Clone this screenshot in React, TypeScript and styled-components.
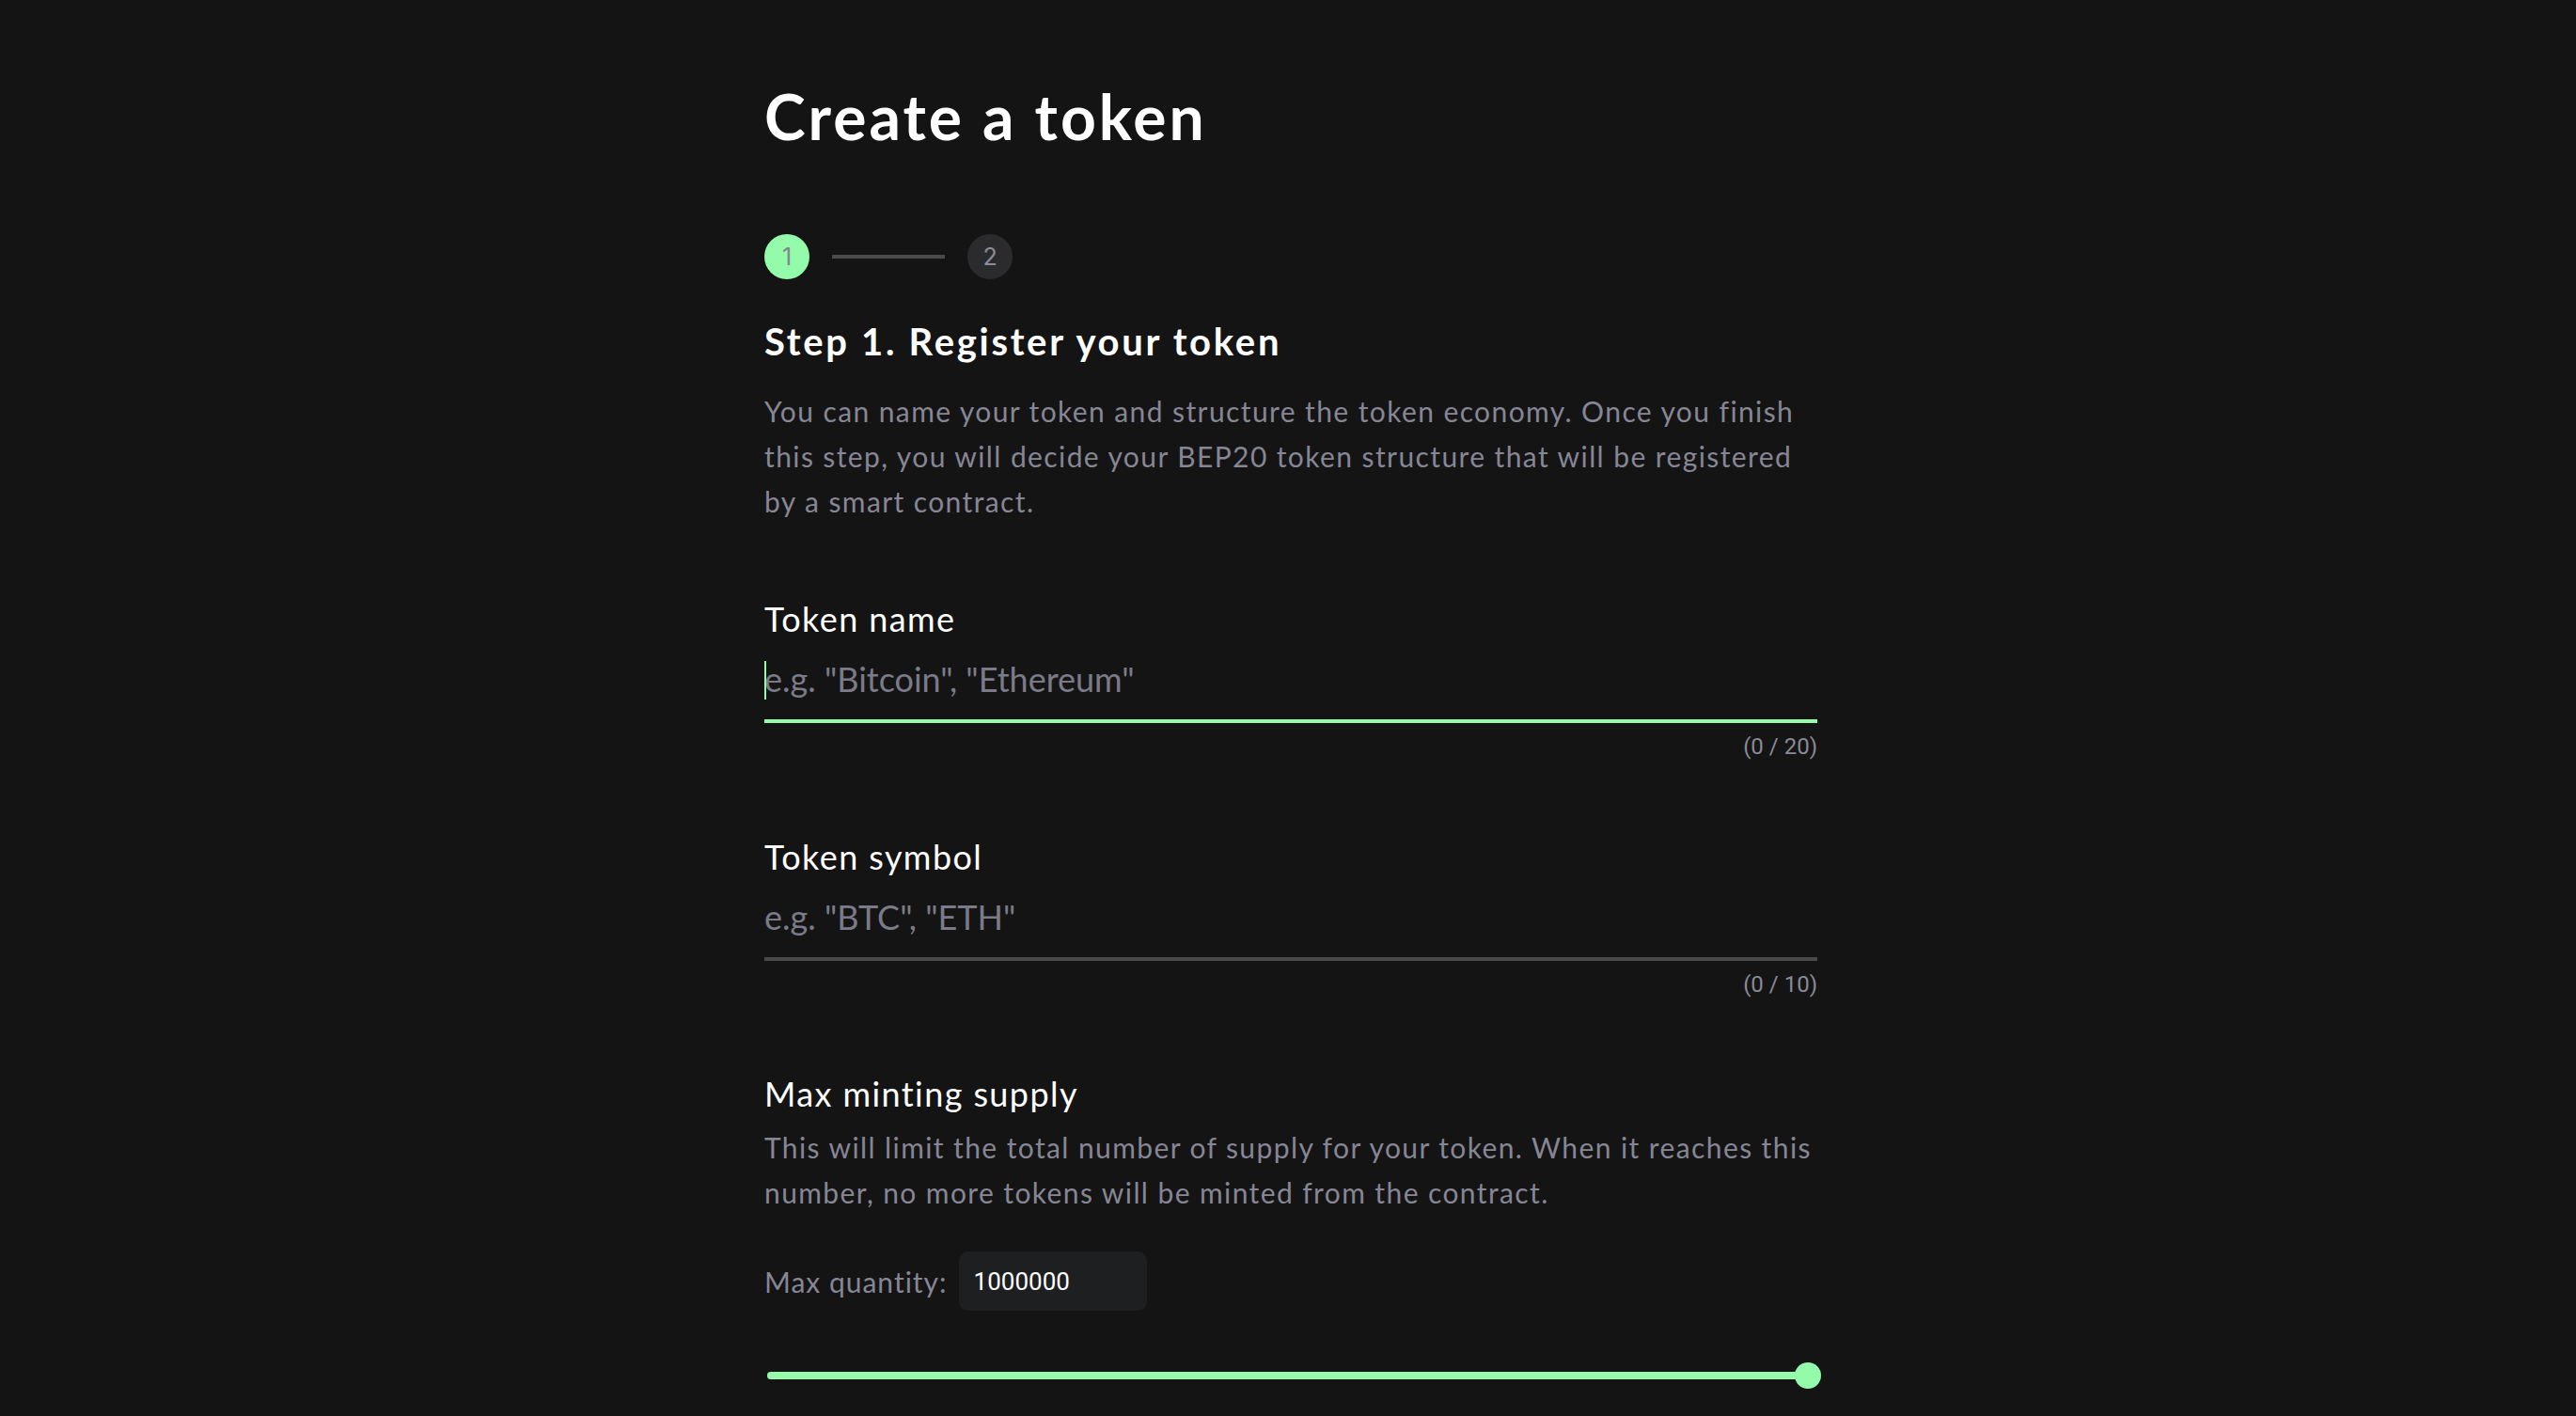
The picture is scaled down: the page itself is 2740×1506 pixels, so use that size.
import React from "react";
import styled, { createGlobalStyle } from "styled-components";

const GlobalStyle = createGlobalStyle`
  html, body {
    margin: 0;
    padding: 0;
    background: #141414;
  }
  body {
    font-family: "Lato", "Open Sans", sans-serif;
    color: #ffffff;
  }
  * { box-sizing: border-box; }
`;

const GREEN = "#94fbaa";
const MUTED = "#868694";

const Page = styled.main`
  min-height: 1506px;
  padding-top: 84px;
`;

const Column = styled.div`
  width: 1126px;
  padding-left: 6px;
  margin: 0 auto;
  display: flex;
  flex-direction: column;
`;

const Title = styled.h1`
  margin: 0;
  font-size: 66px;
  line-height: 1.2;
  font-weight: 700;
  letter-spacing: 3px;
`;

const Stepper = styled.div`
  margin-top: 86px;
  display: flex;
  align-items: center;
  gap: 24px;
`;

const StepDot = styled.div<{ $active?: boolean }>`
  width: 48px;
  height: 48px;
  border-radius: 50%;
  display: flex;
  align-items: center;
  justify-content: center;
  background: ${(p) => (p.$active ? GREEN : "#2b2b2d")};
  color: ${(p) => (p.$active ? "#82858f" : "#8c8c9a")};
  font-family: "Inter", "Roboto", sans-serif;
  font-size: 25px;
`;

const StepLine = styled.div`
  width: 120px;
  height: 4px;
  background: #4a4a4a;
`;

const StepHeading = styled.h2`
  margin: 42px 0 0;
  font-size: 40px;
  line-height: 48px;
  font-weight: 700;
  letter-spacing: 2.7px;
`;

const Description = styled.p<{ $top: number }>`
  margin: ${(p) => p.$top}px 0 0;
  font-size: 30px;
  line-height: 48px;
  color: ${MUTED};
  letter-spacing: 1.4px;
`;

const Section = styled.section<{ $top: number }>`
  margin-top: ${(p) => p.$top}px;
  display: flex;
  flex-direction: column;
`;

const Label = styled.label`
  font-size: 36px;
  line-height: 43px;
  font-weight: 400;
  color: #ffffff;
  letter-spacing: 1.4px;
`;

const Field = styled.div<{ $focused?: boolean }>`
  position: relative;
  margin-top: 18px;
  padding-bottom: 19px;
  border-bottom: 4px solid ${(p) => (p.$focused ? GREEN : "#4a4a4a")};
`;

const Input = styled.input`
  display: block;
  width: 100%;
  height: 48px;
  padding: 0;
  border: none;
  outline: none;
  background: transparent;
  color: #ffffff;
  font-family: "Lato", sans-serif;
  font-size: 36px;
  caret-color: ${GREEN};
  &::placeholder {
    color: #7b7b88;
  }
`;

const Caret = styled.span`
  position: absolute;
  left: 0;
  top: 5px;
  width: 2px;
  height: 41px;
  background: ${GREEN};
`;

const Counter = styled.div`
  margin-top: 10px;
  align-self: flex-end;
  font-family: "Roboto", sans-serif;
  font-size: 24px;
  line-height: 31px;
  color: #8a8a96;
`;

const QuantityRow = styled.div`
  margin-top: 39px;
  display: flex;
  align-items: center;
  gap: 12px;
`;

const QuantityLabel = styled.span`
  font-size: 30px;
  line-height: 48px;
  color: ${MUTED};
  letter-spacing: 1px;
`;

const QuantityBox = styled.input`
  width: 200px;
  height: 63px;
  padding: 0 16px;
  border: none;
  outline: none;
  border-radius: 10px;
  background: #1e1f21;
  color: #ffffff;
  font-family: "Roboto", sans-serif;
  font-weight: 400;
  font-size: 26px;
`;

const SliderWrap = styled.div`
  margin-top: 55px;
  padding: 0 10px 0 3px;
  height: 28px;
  display: flex;
  align-items: center;
`;

const Track = styled.div`
  position: relative;
  flex: 1;
  height: 8px;
  border-radius: 4px;
  background: #3a3a3a;
`;

const Fill = styled.div`
  height: 100%;
  border-radius: 4px;
  background: ${GREEN};
`;

const Thumb = styled.div`
  position: absolute;
  top: 50%;
  width: 28px;
  height: 28px;
  border-radius: 50%;
  background: ${GREEN};
  transform: translate(-50%, -50%);
`;

export default function App() {
  const value = 1000000;
  const max = 1000000;
  const pct = (value / max) * 100;
  return (
    <Page>
      <GlobalStyle />
      <Column>
        <Title>Create a token</Title>
        <Stepper>
          <StepDot $active>1</StepDot>
          <StepLine />
          <StepDot>2</StepDot>
        </Stepper>
        <StepHeading>Step 1. Register your token</StepHeading>
        <Description $top={26}>
          You can name your token and structure the token economy. Once you finish this step, you
          will decide your BEP20 token structure that will be registered by a smart contract.
        </Description>

        <Section $top={80}>
          <Label>Token name</Label>
          <Field $focused>
            <Input placeholder={'e.g. "Bitcoin", "Ethereum"'} readOnly />
            <Caret />
          </Field>
          <Counter>(0 / 20)</Counter>
        </Section>

        <Section $top={80}>
          <Label>Token symbol</Label>
          <Field>
            <Input placeholder={'e.g. "BTC", "ETH"'} readOnly />
          </Field>
          <Counter>(0 / 10)</Counter>
        </Section>

        <Section $top={79}>
          <Label>Max minting supply</Label>
          <Description $top={11}>
            This will limit the total number of supply for your token. When it reaches this number,
            no more tokens will be minted from the contract.
          </Description>
          <QuantityRow>
            <QuantityLabel>Max quantity:</QuantityLabel>
            <QuantityBox defaultValue="1000000" />
          </QuantityRow>
          <SliderWrap>
            <Track>
              <Fill style={{ width: `${pct}%` }} />
              <Thumb style={{ left: `${pct}%` }} />
            </Track>
          </SliderWrap>
        </Section>
      </Column>
    </Page>
  );
}
